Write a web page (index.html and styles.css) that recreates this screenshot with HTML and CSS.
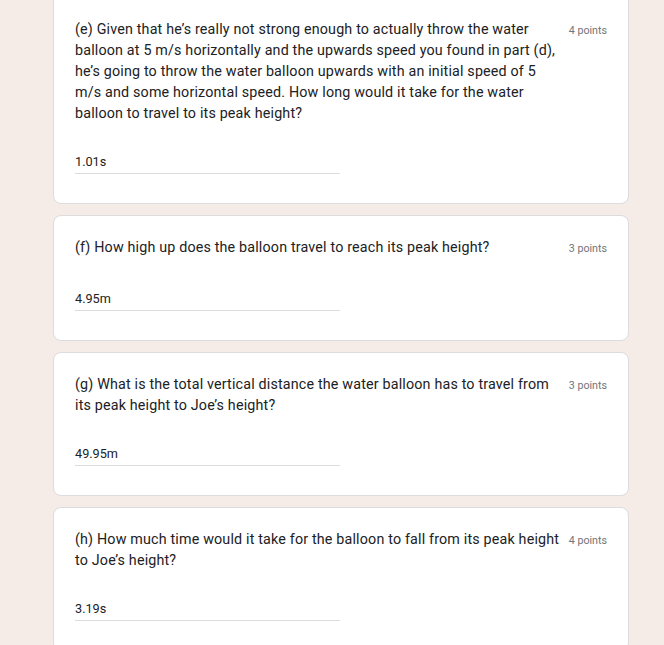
FILE: index.html
```html
<!DOCTYPE html>
<html lang="en">
<head>
<meta charset="utf-8">
<title>Quiz responses</title>
<link rel="stylesheet" href="styles.css">
</head>
<body>
<main class="form">
  <section class="card card--first">
    <div class="head">
      <div class="title">(e) Given that he’s really not strong enough to actually throw the water balloon at 5 m/s horizontally and the upwards speed you found in part (d), he’s going to throw the water balloon upwards with an initial speed of 5 m/s and some horizontal speed. How long would it take for the water balloon to travel to its peak height?</div>
      <div class="points">4 points</div>
    </div>
    <div class="answer">1.01s</div>
  </section>
  <section class="card">
    <div class="head">
      <div class="title">(f) How high up does the balloon travel to reach its peak height?</div>
      <div class="points">3 points</div>
    </div>
    <div class="answer">4.95m</div>
  </section>
  <section class="card">
    <div class="head">
      <div class="title">(g) What is the total vertical distance the water balloon has to travel from its peak height to Joe’s height?</div>
      <div class="points">3 points</div>
    </div>
    <div class="answer">49.95m</div>
  </section>
  <section class="card">
    <div class="head">
      <div class="title">(h) How much time would it take for the balloon to fall from its peak height to Joe’s height?</div>
      <div class="points">4 points</div>
    </div>
    <div class="answer">3.19s</div>
  </section>
</main>
</body>
</html>
```

FILE: styles.css
```css
html, body {
  margin: 0;
  padding: 0;
  background: #f6ece7;
  height: 100%;
  overflow: hidden;
}
body {
  font-family: Roboto, "Liberation Sans", Arial, sans-serif;
  color: #202124;
}
.form {
  width: 576px;
  margin: -10px 0 0 53px;
  display: flex;
  flex-direction: column;
  gap: 11px;
}
.card {
  background: #fff;
  border: 1px solid #dadce0;
  border-radius: 8px;
  padding: 21px 21px 29px 21px;
}
.card--first {
  padding-top: 28px;
}
.head {
  display: flex;
  align-items: flex-start;
  gap: 6px;
  min-height: 24px;
}
.title {
  flex: 1;
  font-size: 14.3px;
  line-height: 21px;
  letter-spacing: 0.17px;
}
.points {
  white-space: nowrap;
  font-size: 10.7px;
  line-height: 21px;
  color: #70757a;
  padding-top: 1px;
}
.answer {
  width: 265px;
  margin-top: 28px;
  padding-bottom: 1px;
  font-size: 12.7px;
  line-height: 20px;
  border-bottom: 1px solid #dadce0;
}
```
